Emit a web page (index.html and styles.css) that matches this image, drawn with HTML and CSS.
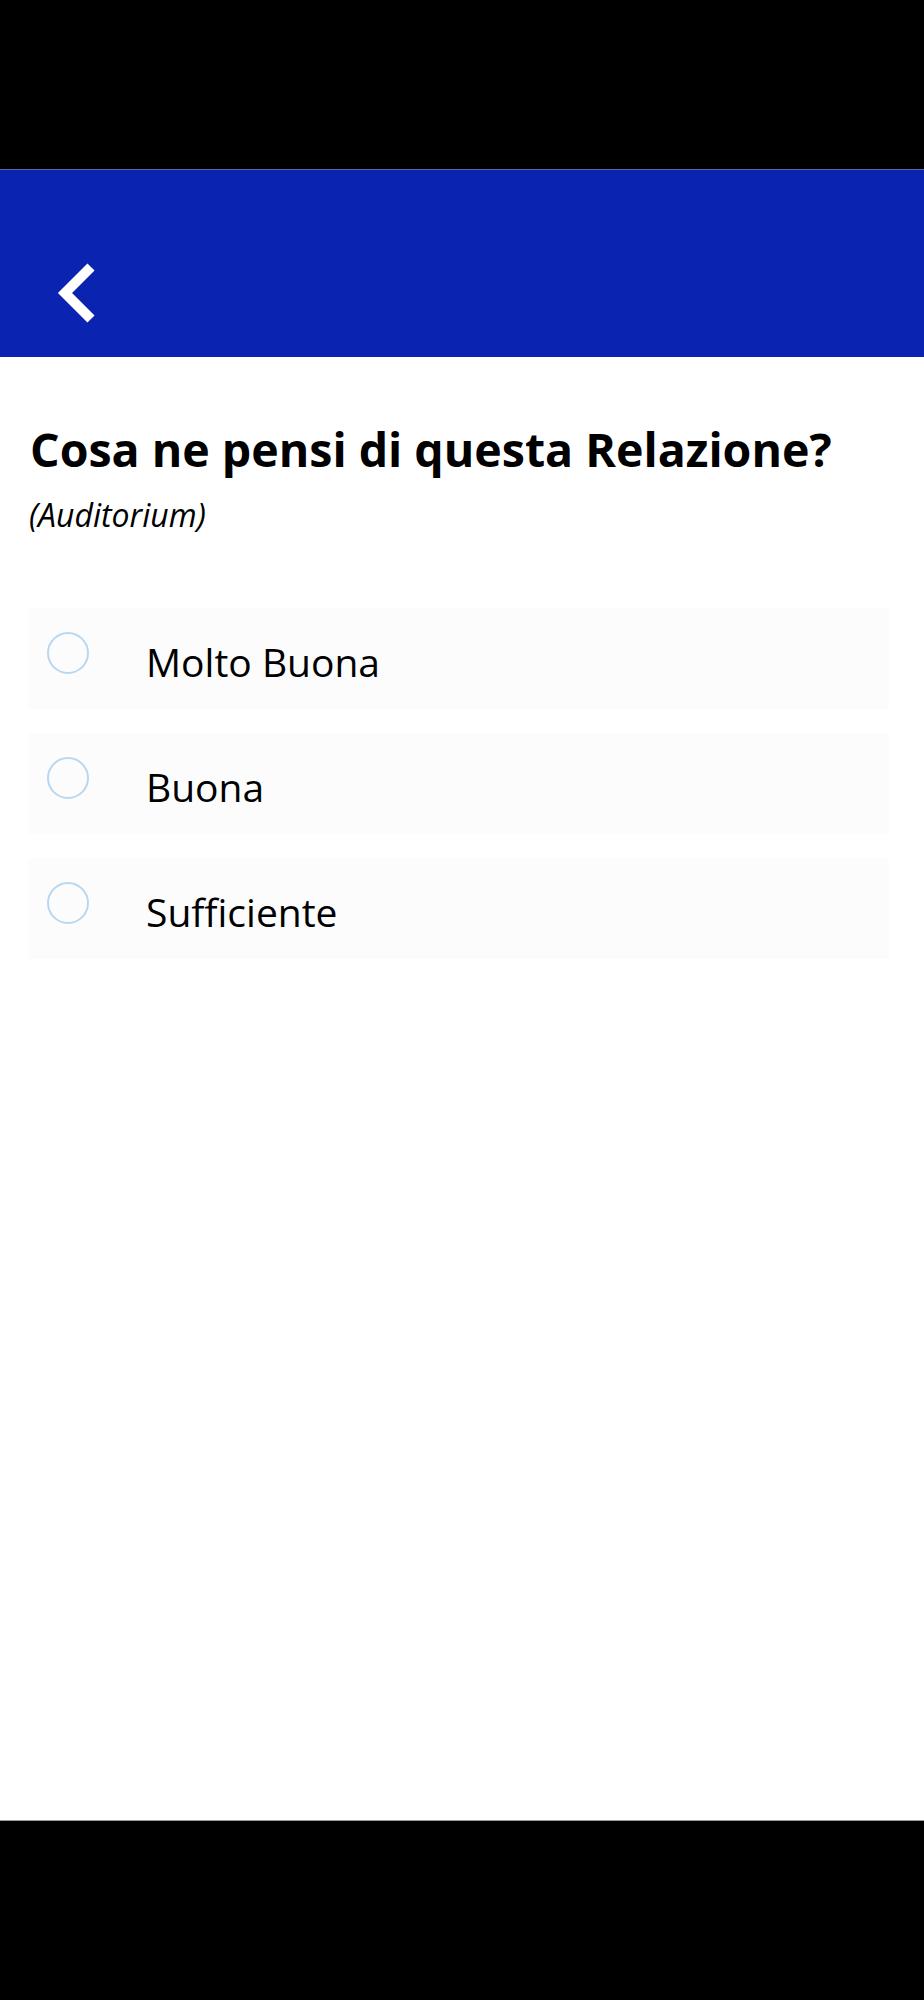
FILE: index.html
```html
<!DOCTYPE html>
<html lang="it">
<head>
<meta charset="utf-8">
<link rel="stylesheet" href="styles.css">
</head>
<body>
<div class="screen">
  <div class="statusbar"></div>
  <header class="appbar">
    <button class="back" aria-label="Indietro">
      <svg width="40" height="64" viewBox="0 0 40 64">
        <path d="M35 5 L9 31 L35 57" fill="none" stroke="#fff" stroke-width="10" stroke-linecap="butt" stroke-linejoin="miter"/>
      </svg>
    </button>
  </header>
  <main class="content">
    <h1 class="question">Cosa ne pensi di questa Relazione?</h1>
    <p class="place">(Auditorium)</p>
    <ul class="options">
      <li class="option"><span class="radio"></span><span class="label">Molto Buona</span></li>
      <li class="option"><span class="radio"></span><span class="label">Buona</span></li>
      <li class="option"><span class="radio"></span><span class="label">Sufficiente</span></li>
    </ul>
  </main>
  <div class="navbar"></div>
</div>
</body>
</html>
```
FILE: styles.css
```css
html, body {
  margin: 0;
  padding: 0;
  background: #fff;
}
.screen {
  display: flex;
  flex-direction: column;
  min-height: 2000px;
  font-family: "Open Sans", "Noto Sans", sans-serif;
  color: #000;
}
.statusbar {
  height: 169px;
  background: #000;
  border-bottom: 1px solid #5b68a8;
}
.appbar {
  height: 187px;
  background: #0a23b0;
  display: flex;
  align-items: flex-end;
  padding-left: 56px;
  box-sizing: border-box;
  padding-bottom: 31px;
}
.back {
  background: none;
  border: 0;
  padding: 0;
  width: 40px;
  height: 64px;
  display: block;
}
.back svg { display: block; }
.content {
  flex: 1;
  padding: 62px 35px 0 28px;
}
.question {
  margin: 0 0 0 2px;
  font-size: 46.5px;
  font-weight: 700;
  line-height: 60px;
}
.place {
  margin: 16px 0 0 1px;
  font-size: 32px;
  font-style: italic;
  line-height: 40px;
}
.options {
  list-style: none;
  margin: 73px 0 0 0;
  padding: 0;
  display: flex;
  flex-direction: column;
  gap: 24px;
}
.option {
  height: 101px;
  background: #fcfcfc;
  border-radius: 3px;
  display: flex;
  align-items: center;
  padding-left: 19px;
}
.radio {
  width: 38px;
  height: 38px;
  border: 2px solid #b8d7f0;
  border-radius: 50%;
  box-sizing: content-box;
  margin-top: -12px;
  flex: none;
}
.label {
  margin-left: 57px;
  margin-top: 7px;
  font-size: 39px;
  line-height: 52px;
}
.navbar {
  height: 179px;
  background: #000;
  border-top: 1px solid #9a9a9a;
}
```
